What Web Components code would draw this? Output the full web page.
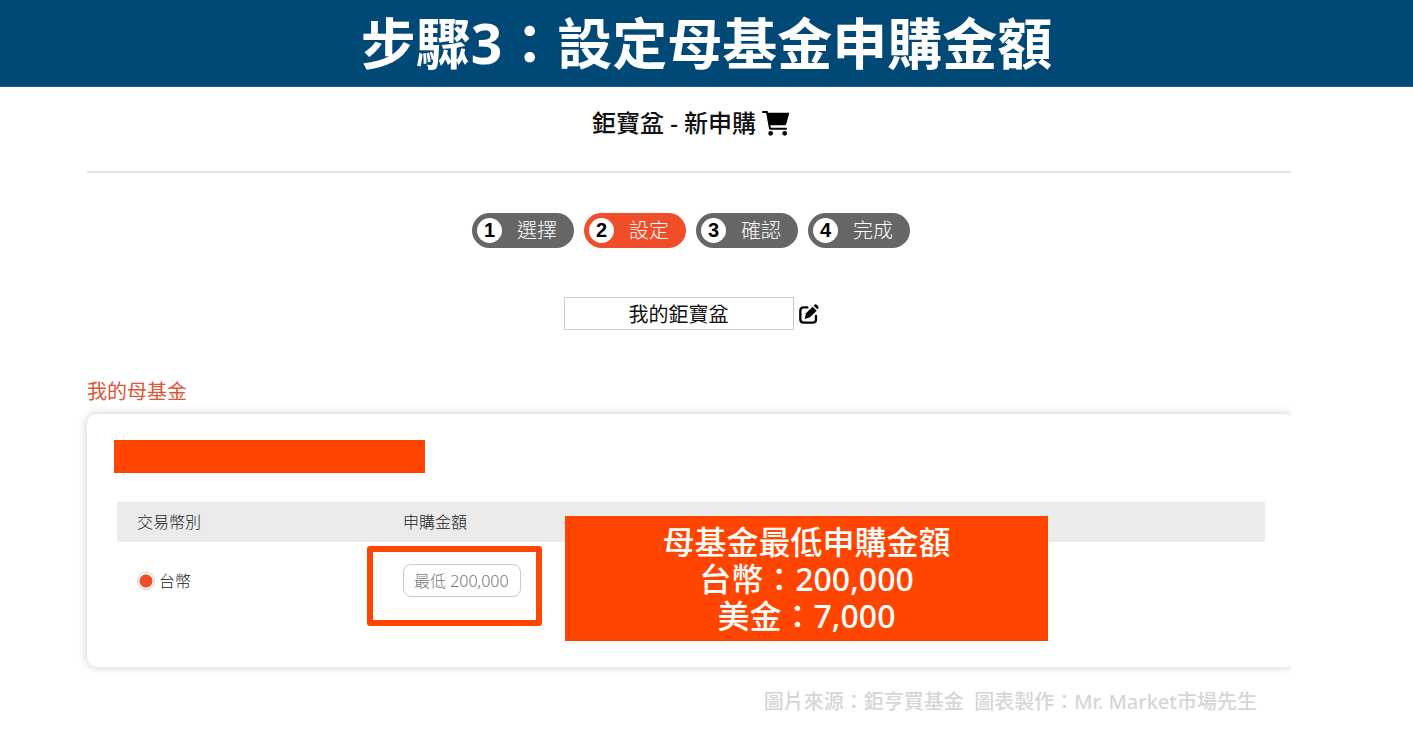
<!DOCTYPE html>
<html lang="zh-Hant">
<head>
<meta charset="utf-8">
<meta name="viewport" content="width=device-width, initial-scale=1">
<title>鉅寶盆 - 新申購</title>
<style>
  body {
    --accent: #f04e2a;
    --mark: #ff4500;
    --line: #e2e2e2;
    margin: 0;
    background: #fff;
    color: #111;
    font-family: "Noto Sans", "Noto Sans CJK TC", sans-serif;
    font-size: 16px;
  }
</style>
</head>
<body>
<fund-page>
  <page-banner slot="banner">步驟3：設定母基金申購金額</page-banner>
  <page-heading>鉅寶盆 - 新申購</page-heading>
  <step-list current="2" steps="選擇,設定,確認,完成"></step-list>
  <basket-name value="我的鉅寶盆"></basket-name>
  <fund-card heading="我的母基金">
    <currency-table></currency-table>
    <call-out slot="note">母基金最低申購金額<br>台幣：200,000<br>美金：7,000</call-out>
  </fund-card>
  <source-credit slot="credit">圖片來源：鉅亨買基金  圖表製作：Mr. Market市場先生</source-credit>
</fund-page>

<script>
class BaseElement extends HTMLElement {
  connectedCallback() {
    if (this.shadowRoot) {
      return;
    }
    this.attachShadow({ mode: "open" }).innerHTML = this.render();
  }
}

customElements.define("fund-page", class extends BaseElement {
  render() {
    return `
      <style>
        :host { display: block; }

        /* the content runs a little past the clipped edge on the right */
        main {
          margin-right: 122px;
          padding: 0 0 16px 87px;
          overflow: hidden;
        }

        .content {
          display: flex;
          flex-direction: column;
          margin-right: -4px;
        }
      </style>
      <slot name="banner"></slot>
      <main><div class="content"><slot></slot></div></main>
      <slot name="credit"></slot>
    `;
  }
});

customElements.define("page-banner", class extends BaseElement {
  render() {
    return `
      <style>
        :host {
          display: block;
          background: #004876;
          border-bottom: 1px solid #3a5a74;
          color: #fff;
        }

        h1 {
          margin: 0;
          font-size: 55px;
          font-weight: 700;
          line-height: 86px;
          text-align: center;
        }
      </style>
      <h1><slot></slot></h1>
    `;
  }
});

customElements.define("page-heading", class extends BaseElement {
  render() {
    return `
      <style>
        :host {
          display: flex;
          justify-content: center;
          align-items: center;
          gap: 6px;
          height: 72px;
          padding-bottom: 12px;
          border-bottom: 2px solid var(--line);
        }

        h2 {
          margin: 0;
          font-size: 24px;
          font-weight: 500;
          line-height: 36px;
        }

        svg { width: 28px; height: 25px; }
      </style>
      <h2><slot></slot></h2>
      <svg viewBox="0 0 84 75" aria-hidden="true">
        <path d="M3 3h12l9 50h48" fill="none" stroke="#000" stroke-width="6" stroke-linecap="round" stroke-linejoin="round"/>
        <path d="M15 5h67l-9 33q-1 5-6 5H22z" fill="#000"/>
        <circle cx="26" cy="67" r="7"/>
        <circle cx="68" cy="67" r="7"/>
      </svg>
    `;
  }
});

customElements.define("step-list", class extends BaseElement {
  render() {
    const current = Number(this.getAttribute("current"));
    const items = this.getAttribute("steps").split(",").map((label, i) => `
      <li${i + 1 === current ? ' aria-current="step"' : ""}><b>${i + 1}</b><span>${label}</span></li>
    `).join("");
    return `
      <style>
        :host { display: block; padding-top: 40px; }

        ol {
          display: flex;
          justify-content: center;
          gap: 10px;
          margin: 0;
          padding: 0;
          list-style: none;
        }

        li {
          display: flex;
          align-items: center;
          gap: 15px;
          padding: 5px 17px 5px 5px;
          border-radius: 18px;
          background: #666;
          color: #fff;
          font-size: 20px;
          font-weight: 300;
          line-height: 25px;
        }

        li[aria-current] { background: var(--accent); }

        b {
          width: 25px;
          border-radius: 50%;
          background: #fff;
          color: #000;
          font-family: "Liberation Sans", sans-serif;
          font-weight: 700;
          text-align: center;
        }
      </style>
      <ol>${items}</ol>
    `;
  }
});

customElements.define("basket-name", class extends BaseElement {
  render() {
    return `
      <style>
        :host {
          display: flex;
          justify-content: center;
          align-items: center;
          gap: 5px;
          padding-top: 49px;
        }

        input {
          box-sizing: border-box;
          width: 230px;
          height: 33px;
          padding: 0;
          border: 1px solid #ccc;
          color: #111;
          font: inherit;
          font-size: 20px;
          text-align: center;
        }

        button {
          display: flex;
          padding: 0;
          border: 0;
          background: none;
          color: #000;
        }

        svg { width: 20px; height: 20px; }
      </style>
      <input type="text" aria-label="鉅寶盆名稱" value="${this.getAttribute("value")}">
      <button type="button" aria-label="編輯名稱">
        <svg viewBox="0 0 60 60" aria-hidden="true">
          <path d="M25 10H14Q4 10 4 20v26q0 10 10 10h27q10 0 10-10V36" fill="none" stroke="currentColor" stroke-width="7" stroke-linecap="round"/>
          <path d="M17 45l4-17L41 8l12 12-20 20z" fill="currentColor"/>
          <path d="M44 5l2-2q4-4 8 0l3 3q4 4 0 8l-2 2z" fill="currentColor"/>
        </svg>
      </button>
    `;
  }
});

customElements.define("fund-card", class extends BaseElement {
  render() {
    return `
      <style>
        :host { display: block; padding-top: 46px; }

        h3 {
          margin: 0 0 6px;
          color: #dc5537;
          font-size: 20px;
          font-weight: 400;
          line-height: 32px;
        }

        section {
          position: relative;
          padding: 26px 30px 0 27px;
          border-radius: 10px;
          background: #fff;
          box-shadow: 0 0 10px rgba(0, 0, 0, 0.2);
        }

        .name {
          width: 311px;
          height: 33px;
          margin-bottom: 29px;
          background: var(--mark);
        }

        .body { padding-left: 3px; }

        ::slotted([slot="note"]) {
          position: absolute;
          top: 102px;
          left: 478px;
        }
      </style>
      <h3>${this.getAttribute("heading")}</h3>
      <section>
        <div class="name"></div>
        <div class="body"><slot></slot></div>
        <slot name="note"></slot>
      </section>
    `;
  }
});

customElements.define("currency-table", class extends BaseElement {
  render() {
    return `
      <style>
        :host { display: block; }

        table {
          width: 100%;
          border-collapse: collapse;
          color: #222;
          font-weight: 300;
          line-height: 24px;
        }

        th {
          padding: 8px 20px;
          background: #ebebeb;
          font-weight: 300;
          text-align: left;
        }

        th:first-child { width: 226px; }

        td {
          padding: 22px 20px 70px;
          vertical-align: top;
        }

        label {
          display: flex;
          align-items: center;
          gap: 4px;
          height: 33px;
        }

        input[type="radio"] {
          appearance: none;
          width: 18px;
          height: 18px;
          margin: 0;
          border: 1px solid #d0d0d0;
          border-radius: 50%;
          background: radial-gradient(circle, var(--accent) 6px, #fff 7px);
        }

        .amount {
          position: relative;
          width: 118px;
        }

        .amount input {
          display: block;
          box-sizing: border-box;
          width: 100%;
          height: 33px;
          padding: 0 10px;
          border: 1px solid #ccc;
          border-radius: 8px;
          font: inherit;
        }

        .amount input::placeholder { color: #777; }

        .amount::after {
          content: "";
          position: absolute;
          inset: -18px -21px -29px -36px;
          border: 6px solid var(--mark);
          border-radius: 3px;
          pointer-events: none;
        }
      </style>
      <table>
        <thead>
          <tr><th scope="col">交易幣別</th><th scope="col">申購金額</th></tr>
        </thead>
        <tbody>
          <tr>
            <td><label><input type="radio" name="currency" checked>台幣</label></td>
            <td><div class="amount"><input type="text" inputmode="numeric" aria-label="申購金額" placeholder="最低 200,000"></div></td>
          </tr>
        </tbody>
      </table>
    `;
  }
});

customElements.define("call-out", class extends BaseElement {
  render() {
    return `
      <style>
        :host {
          display: block;
          box-sizing: border-box;
          width: 483px;
          padding: 7px 0;
          background: var(--mark);
          color: #fff;
          font-size: 32px;
          font-weight: 500;
          line-height: 37px;
          text-align: center;
        }
      </style>
      <slot></slot>
    `;
  }
});

customElements.define("source-credit", class extends BaseElement {
  render() {
    return `
      <style>
        :host {
          display: block;
          padding: 4px 156px 0 0;
          color: #d6d6d6;
          font-size: 20px;
          font-weight: 500;
          line-height: 30px;
          text-align: right;
        }

        p { margin: 0; white-space: pre-wrap; }
      </style>
      <p><slot></slot></p>
    `;
  }
});
</script>
</body>
</html>
